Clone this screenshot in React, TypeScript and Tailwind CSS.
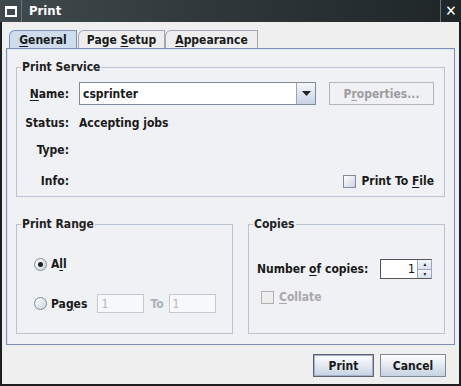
import React from "react";

function U({ children }: { children: React.ReactNode }) {
  return <span className="underline underline-offset-2">{children}</span>;
}

function Radio({ checked }: { checked?: boolean }) {
  return (
    <span className="flex h-[13px] w-[13px] items-center justify-center rounded-full border border-[#7f8a99] bg-gradient-to-br from-white to-[#c9d3e0]">
      {checked && <span className="h-[5px] w-[5px] rounded-full bg-[#222]" />}
    </span>
  );
}

function Check({ disabled }: { disabled?: boolean }) {
  return (
    <span
      className={
        disabled
          ? "h-[13px] w-[13px] border border-[#b0b0b0] bg-[#eeeeee]"
          : "h-[13px] w-[13px] border border-[#7f8a99] bg-gradient-to-br from-white to-[#c9d3e0]"
      }
    />
  );
}

function Group({ title, className, children }: { title: string; className: string; children: React.ReactNode }) {
  return (
    <fieldset className={"border border-[#b9c3d1] " + className}>
      <legend className="ml-[4px] px-[1px] text-[#222]">{title}</legend>
      {children}
    </fieldset>
  );
}

export default function App() {
  return (
    <div className="flex h-[386px] w-[461px] flex-col bg-[#1c1f21] font-[family-name:'DejaVu_Sans_Condensed','DejaVu_Sans',sans-serif] text-[12px] font-bold text-[#1a1a1a]">
      {/* title bar */}
      <div className="flex h-[22px] items-stretch bg-gradient-to-r from-[#404a4e] via-[#2e3639] to-[#1f2628]">
        <div className="flex w-[22px] items-center justify-center border-r border-[#6a7376]">
          <span className="h-[11px] w-[12px] border-2 border-t-[3px] border-white" />
        </div>
        <span className="ml-[7px] self-center text-[13px] text-white">Print</span>
        <div className="flex-1" />
        <div className="flex w-[21px] items-center justify-center border-l border-[#6a7376] text-[15px] text-white">
          ✕
        </div>
      </div>

      {/* body */}
      <div className="mb-[2px] ml-[2px] mr-[2px] flex flex-1 flex-col bg-[#efefef]">
        {/* tabs */}
        <div className="ml-[7px] mt-[8px] flex h-[18px] items-end">
          <div className="flex h-[18px] w-[68px] items-center justify-center rounded-tl-[6px] border border-b-0 border-[#7d8fb3] bg-[#cfdcee]">
            <U>G</U>eneral
          </div>
          <div className="ml-[1px] flex h-[18px] w-[87px] items-center justify-center rounded-tl-[6px] border border-b-0 border-[#a0a8b4] bg-[#eeeeee]">
            Page&nbsp;<U>S</U>etup
          </div>
          <div className="flex h-[18px] w-[93px] items-center justify-center rounded-tl-[6px] border border-b-0 border-[#a0a8b4] bg-[#eeeeee]">
            <U>A</U>ppearance
          </div>
        </div>

        {/* panel */}
        <div className="ml-[4px] mr-[4px] flex h-[297px] flex-col border border-[#7d8fb3] bg-[#f0f1f4] px-[9px] pt-[9px] shadow-[inset_1px_1px_0_#dfe6f1]">
          <Group title="Print Service" className="h-[139px]">
            <div className="mt-[6px] grid grid-cols-[45px_1fr] gap-x-[10px] pl-[7px] pr-[10px]">
              <div className="flex h-[23px] items-center justify-end">
                <U>N</U>ame:
              </div>
              <div className="flex h-[23px] items-center">
                <div className="flex h-[23px] w-[237px] border border-[#7f8a99] bg-white">
                  <span className="flex flex-1 items-center pl-[3px]">csprinter</span>
                  <span className="flex w-[19px] items-center justify-center border-l border-[#9aa6b8] bg-gradient-to-b from-[#f4f7fb] to-[#c8d3e3]">
                    <svg width="9" height="5" viewBox="0 0 9 5">
                      <path d="M0 0h9L4.5 5z" fill="#222" />
                    </svg>
                  </span>
                </div>
                <div className="ml-[13px] flex h-[23px] w-[105px] items-center justify-center border border-[#b4b4b4] text-[#9d9d9d]">
                  P<U>r</U>operties...
                </div>
              </div>
              <div className="mt-[9px] flex h-[18px] items-center justify-end">Status:</div>
              <div className="mt-[9px] flex h-[18px] items-center">Accepting jobs</div>
              <div className="mt-[9px] flex h-[18px] items-center justify-end">Type:</div>
              <div className="mt-[9px] flex h-[18px]" />
              <div className="mt-[13px] flex h-[18px] items-center justify-end">Info:</div>
              <div className="mt-[13px] flex h-[18px] items-center justify-end gap-[5px]">
                <Check />
                <span>
                  Print To <U>F</U>ile
                </span>
              </div>
            </div>
          </Group>

          <div className="mt-[18px] flex gap-[15px]">
            <Group title="Print Range" className="h-[119px] w-[217px]">
              <div className="pl-[17px]">
                <div className="mt-[22px] flex items-center gap-[4px]">
                  <Radio checked />
                  <span>
                    A<U>l</U>l
                  </span>
                </div>
                <div className="mt-[21px] flex items-center">
                  <Radio />
                  <span className="ml-[4px]">
                    Pa<U>g</U>es
                  </span>
                  <span className="ml-[10px] flex h-[19px] w-[47px] items-center border border-[#c3c9d2] bg-[#f7f8fa] pl-[3px] font-normal text-[#b5b5b5]">
                    1
                  </span>
                  <span className="ml-[6px] text-[#aab0b8]">To</span>
                  <span className="ml-[5px] flex h-[19px] w-[47px] items-center border border-[#c3c9d2] bg-[#f7f8fa] pl-[3px] font-normal text-[#b5b5b5]">
                    1
                  </span>
                </div>
              </div>
            </Group>
            <Group title="Copies" className="h-[119px] w-[197px]">
              <div className="pl-[8px]">
                <div className="mt-[26px] flex items-center">
                  <span>
                    Number <U>o</U>f copies:
                  </span>
                  <div className="ml-[12px] flex h-[20px] w-[52px] border border-[#555] border-r-[#9aa6b8] bg-white">
                    <span className="flex flex-1 items-center justify-end pr-[2px] text-[13px] font-normal">1</span>
                    <div className="flex w-[14px] flex-col border-l border-[#9aa6b8]">
                      <span className="flex flex-1 items-center justify-center border-b border-[#9aa6b8] bg-gradient-to-b from-[#f4f7fb] to-[#d8e0ea] text-[6px] leading-none">▴</span>
                      <span className="flex flex-1 items-center justify-center bg-gradient-to-b from-[#f4f7fb] to-[#d8e0ea] text-[6px] leading-none">▾</span>
                    </div>
                  </div>
                </div>
                <div className="ml-[4px] mt-[9px] flex items-center gap-[5px] text-[#a8a8a8]">
                  <Check disabled />
                  <span>
                    <U>C</U>ollate
                  </span>
                </div>
              </div>
            </Group>
          </div>
        </div>

        {/* buttons */}
        <div className="mr-[13px] mt-[9px] flex justify-end gap-[6px]">
          <div className="flex h-[23px] w-[61px] items-center justify-center border border-[#5b6470] bg-gradient-to-b from-white to-[#c6d2e2] shadow-[inset_0_0_0_1px_#9fb1cc]">
            Print
          </div>
          <div className="flex h-[23px] w-[66px] items-center justify-center border border-[#7f8a99] bg-gradient-to-b from-white to-[#c6d2e2]">
            Cancel
          </div>
        </div>
      </div>
    </div>
  );
}
